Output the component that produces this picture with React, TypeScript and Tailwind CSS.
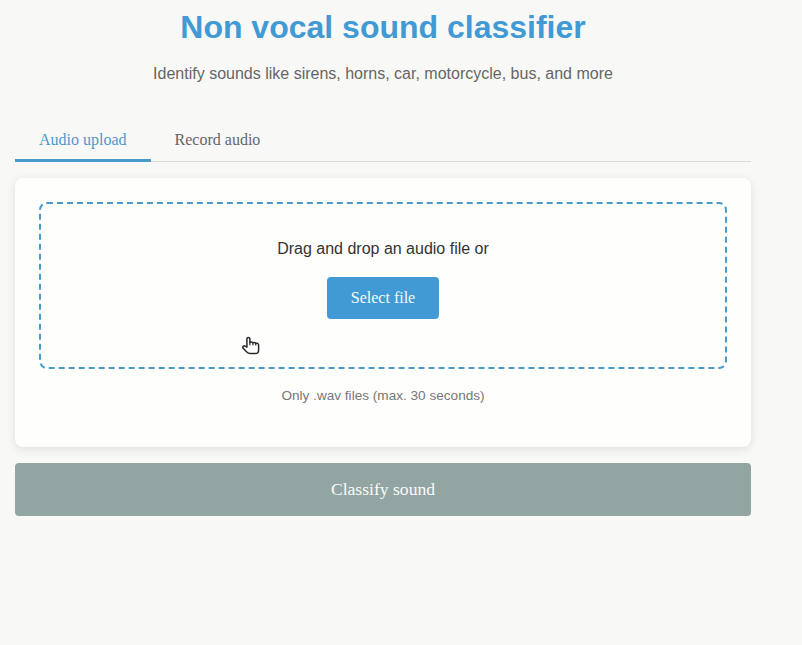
const serif = "font-['Liberation_Serif',serif]";

function HandCursor() {
  return (
    <svg className="pointer-events-none absolute left-[201px] top-[132px]" width="19" height="20" viewBox="0 0 19 20" fill="none">
      <path
        d="M4.9 11.2V2.9C4.9 1 7.9 1 7.9 2.9V6.5C8.7 5.7 10.5 5.8 10.9 6.8C11.8 6.2 13.4 6.4 13.8 7.4C14.9 6.9 16.6 7.4 16.6 9V14.3C16.6 16.3 15.2 17.6 13.2 17.6H8.2C6.6 17.6 5.5 16.8 4.5 15.8L1.2 12.3C.1 10.7 1.6 9.3 3.1 10.1Z"
        fill="white"
        stroke="#292929"
        strokeWidth="1.5"
        strokeLinejoin="round"
      />
      <path d="M7.9 6V9.2M10.9 6.8V9.2M13.8 7.4V9.6" stroke="#292929" strokeWidth="1.2" />
    </svg>
  );
}

export default function App() {
  return (
    <div className="h-[645px] overflow-hidden bg-[#f8f8f7] pl-[15px] font-['Liberation_Sans',sans-serif] text-[#333]">
      <main className="flex w-[736px] flex-col">
        <header className="flex flex-col items-center pt-[9px]">
          <h1 className="text-[32px] leading-[37px] font-bold text-[#419ad4]">Non vocal sound classifier</h1>
          <p className="mt-[18px] text-base leading-[19px] text-[#666]">
            Identify sounds like sirens, horns, car, motorcycle, bus, and more
          </p>
        </header>

        <nav className="mt-9 flex h-[43px] border-b border-[#d9dad9]">
          <button className={`h-[43px] w-[135.6px] shrink-0 border-b-[3px] border-[#4a9ac9] pt-0.5 text-base text-[#4a9ac9] ${serif}`}>
            Audio upload
          </button>
          <button className={`h-[43px] border-b-[3px] border-transparent px-6 pt-0.5 text-base text-[#666] ${serif}`}>
            Record audio
          </button>
        </nav>

        <section className="mt-4 h-[269px] rounded-lg bg-[#fefefd] p-6 shadow-[0_2px_10px_rgba(0,0,0,0.1)]">
          <div className="relative flex h-[167px] flex-col items-center rounded-lg border-2 border-dashed border-[#4a9ac9] pt-[35px]">
            <p className="text-base leading-[20px]">Drag and drop an audio file or</p>
            <button className={`mt-[18px] h-[42px] w-28 rounded bg-[#419ad4] text-base text-[#f4faff] ${serif}`}>
              Select file
            </button>
            <HandCursor />
          </div>
          <p className="mt-[19px] text-center text-[13.6px] leading-4 text-[#777]">Only .wav files (max. 30 seconds)</p>
        </section>

        <button className={`mt-4 h-[53px] rounded bg-[#92a5a2] text-[17.6px] text-[#fafafa] ${serif}`}>
          Classify sound
        </button>
      </main>
    </div>
  );
}
